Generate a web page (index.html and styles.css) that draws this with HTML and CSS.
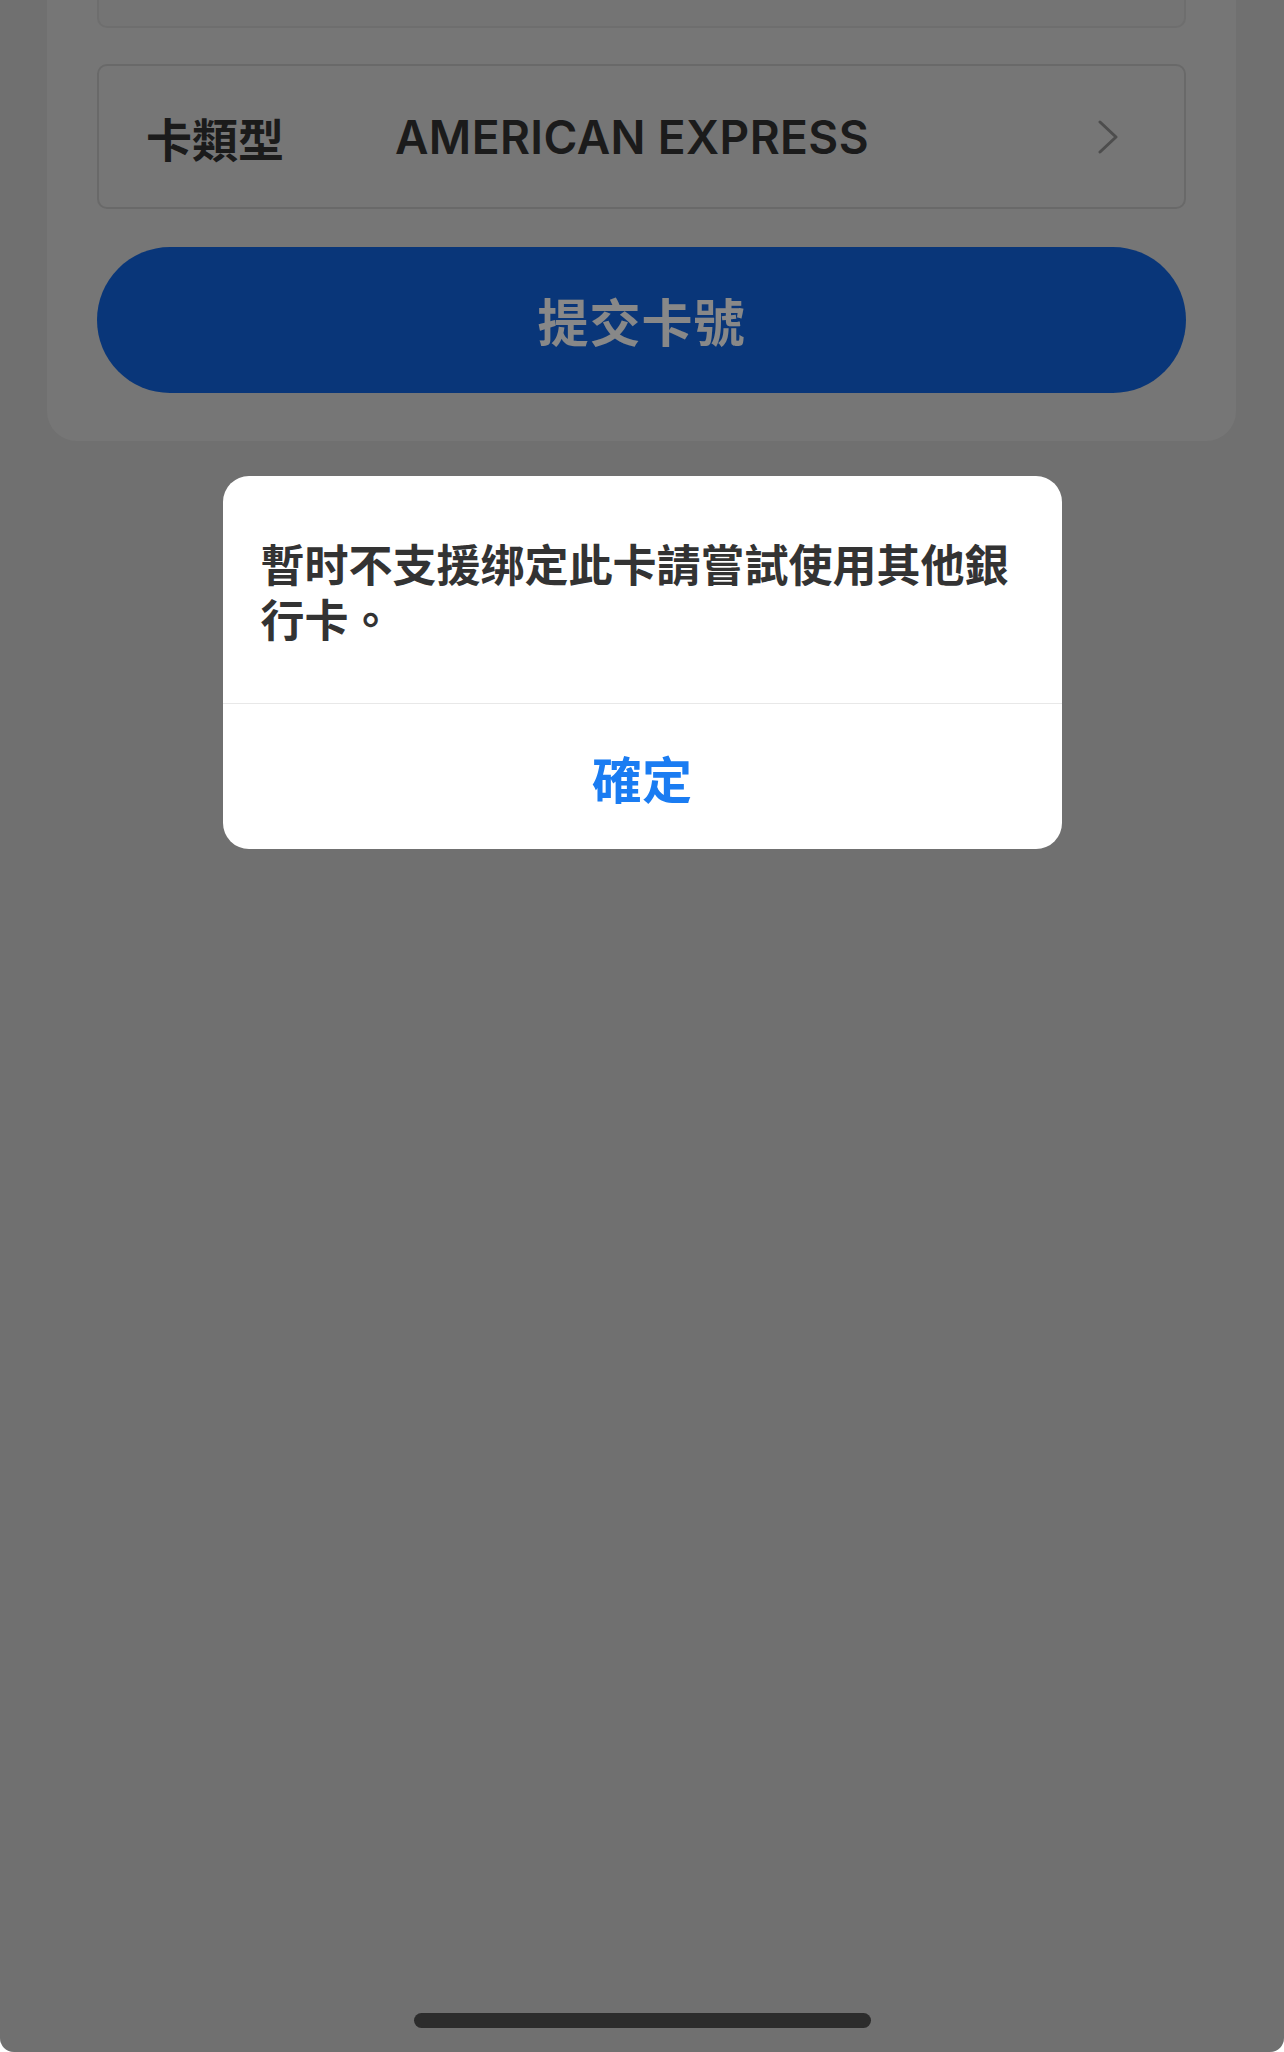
FILE: index.html
```html
<!DOCTYPE html>
<html lang="zh-Hant">
<head>
<meta charset="utf-8">
<title>綁定銀行卡</title>
<link rel="stylesheet" href="styles.css">
</head>
<body>
<div class="screen">
  <div class="card">
    <div class="field-top"></div>
    <div class="select-row">
      <span class="select-label">卡類型</span>
      <span class="select-value">AMERICAN EXPRESS</span>
      <svg class="chevron" width="22" height="34" viewBox="0 0 22 34" aria-hidden="true">
        <polyline points="3,2 19,17 3,32" fill="none" stroke="currentColor" stroke-width="3" stroke-linecap="round" stroke-linejoin="round"/>
      </svg>
    </div>
    <button class="submit">提交卡號</button>
  </div>

  <div class="overlay">
    <div class="alert">
      <p class="alert-msg">暫时不支援绑定此卡請嘗試使用其他銀行卡。</p>
      <div class="alert-actions">
        <button class="alert-btn">確定</button>
      </div>
    </div>
    <div class="home-indicator"></div>
  </div>
</div>
</body>
</html>
```

FILE: styles.css
```css
* {
  box-sizing: border-box;
}

html, body {
  margin: 0;
  padding: 0;
  background: #ffffff;
}

body {
  font-family: "Noto Sans CJK TC", "Noto Sans", sans-serif;
}

.screen {
  position: relative;
  width: 1284px;
  height: 2052px;
  overflow: hidden;
  background: #cfcfcf;
  border-radius: 0 0 14px 14px;
}

.card {
  width: 1189px;
  margin-left: 47px;
  background: #dadada;
  border-radius: 0 0 30px 30px;
  padding: 0 50px 48px;
}

.field-top {
  height: 28px;
  border: 2px solid #cbcbcb;
  border-top: none;
  border-radius: 0 0 10px 10px;
  background: #d6d6d6;
}

.select-row {
  margin-top: 36px;
  height: 145px;
  border: 2px solid #c2c2c2;
  border-radius: 10px;
  display: flex;
  align-items: center;
  padding: 0 65px 0 47px;
  color: #333333;
}

.select-label {
  width: 249px;
  flex: none;
  font-family: "Noto Sans CJK TC", sans-serif;
  font-size: 46px;
  font-weight: 700;
  line-height: 1;
}

.select-value {
  flex: 1;
  font-family: "Inter", "Noto Sans", sans-serif;
  font-size: 46px;
  font-weight: 600;
  letter-spacing: 0.4px;
  line-height: 1;
}

.chevron {
  flex: none;
  color: #8e8e8e;
}

.submit {
  display: block;
  width: 100%;
  height: 146px;
  margin-top: 38px;
  border: none;
  border-radius: 73px;
  background: #1265df;
  color: #fbfbfb;
  font-family: "Noto Sans CJK TC", sans-serif;
  font-size: 51px;
  font-weight: 600;
  letter-spacing: 1px;
}

.overlay {
  position: absolute;
  inset: 0;
  background: rgba(0, 0, 0, 0.46);
  display: flex;
  flex-direction: column;
  align-items: center;
  padding-top: 476px;
}

.alert {
  width: 839px;
  background: #ffffff;
  border-radius: 26px;
  overflow: hidden;
}

.alert-msg {
  margin: 0;
  padding: 60px 38px 57px 38px;
  font-size: 44px;
  line-height: 55px;
  font-weight: 600;
  color: #333333;
}

.alert-actions {
  border-top: 1px solid #e8e8e8;
  height: 146px;
  display: flex;
  align-items: center;
  justify-content: center;
}

.alert-btn {
  border: none;
  background: none;
  padding: 0;
  font-family: "Noto Sans CJK TC", sans-serif;
  font-size: 50px;
  font-weight: 700;
  color: #1a7cf2;
}

.home-indicator {
  margin-top: auto;
  margin-bottom: 24px;
  width: 457px;
  height: 15px;
  border-radius: 8px;
  background: #2c2c2c;
}
```
